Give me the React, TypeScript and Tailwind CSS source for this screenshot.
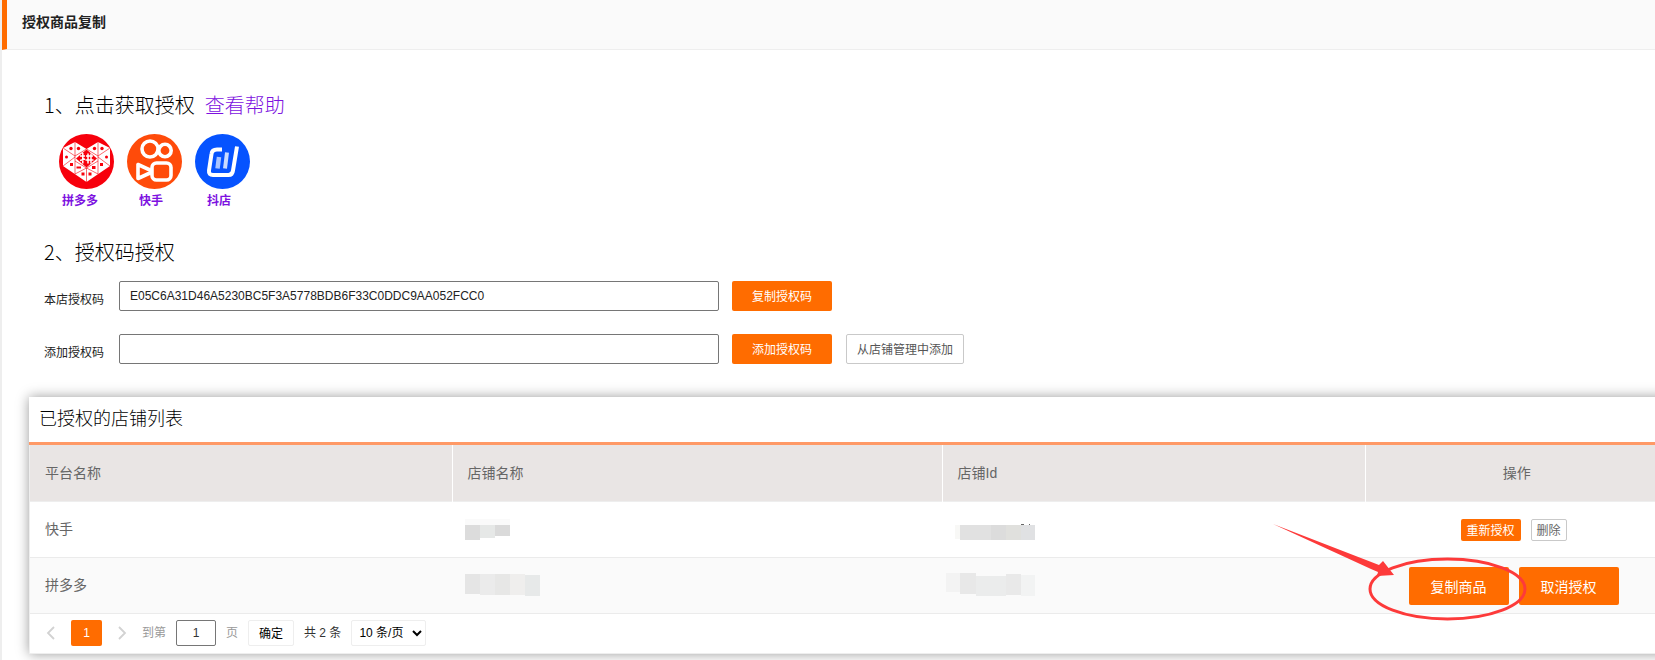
import React from 'react';

const platforms = [
  { name: '拼多多', labelClass: 'pl-[3px]', Logo: PinduoduoLogo },
  { name: '快手', labelClass: 'pl-3', Logo: KuaishouLogo },
  { name: '抖店', labelClass: 'pl-3', Logo: DoudianLogo },
];

function PinduoduoLogo() {
  return (
    <svg viewBox="0 0 55 55" className="size-[55px]" aria-hidden="true">
      <circle cx="27.5" cy="27.5" r="27.5" fill="#f7000c" />
      <path d="M16 8 27.5 15 39 8 51 14V32L27.5 48 4 32V14Z" fill="#fff" />
      <g stroke="#f7000c" strokeWidth="0.6" fill="none">
        <path d="M16 8V40M39 8V40M4 14 16 22 27.5 15M51 14 39 22 27.5 15M4 32 16 23M51 32 39 23M16 27 27.5 34 16 40M39 27 27.5 34 39 40M27.5 34V48" />
      </g>
      <path d="M27.5 15.500 38 24.500 27.5 33.500 17 24.500Z" fill="#f7000c" />
      <g stroke="#fff" strokeWidth="1.5" fill="none">
        <path d="M21 22h5M23.800 19v10.500M21 26.500l5-1.500M27 22h7M26.500 26h8M29 19.500v10M32 19.500v10" />
      </g>
      <g fill="#f7000c">
        <circle cx="12" cy="14.500" r="1.7" />
        <circle cx="19.500" cy="14.500" r="1.7" />
        <circle cx="35.500" cy="14.500" r="1.7" />
        <circle cx="43" cy="14.500" r="1.7" />
        <circle cx="7.500" cy="23" r="1.5" />
        <circle cx="47.500" cy="23" r="1.5" />
        <path d="M11 29h3v3h-3zM41 29h3v3h-3zM17.500 32.500h4.500v2h-4.500zM33 32h3.500v3H33zM22.500 38.500h3v3h-3zM29.500 38.500h3v3h-3z" />
      </g>
    </svg>
  );
}

function KuaishouLogo() {
  return (
    <svg viewBox="0 0 55 55" className="size-[55px]" aria-hidden="true">
      <circle cx="27.5" cy="27.5" r="27.5" fill="#ff4b0a" />
      <g fill="none" stroke="#fff" strokeWidth="3.6" strokeLinejoin="round">
        <circle cx="23" cy="15" r="8" />
        <circle cx="38" cy="16.500" r="6.200" />
        <rect x="25" y="29" width="19" height="17" rx="4.500" />
        <path d="M11 30.500v14l13-6v-2z" />
      </g>
    </svg>
  );
}

function DoudianLogo() {
  return (
    <svg viewBox="0 0 55 55" className="size-[55px]" aria-hidden="true">
      <circle cx="27.5" cy="27.5" r="27.5" fill="#0653ff" />
      <path
        d="M27 15.500h-5q-5 0-5.500 4.500l-2.500 16.500q-.5 4.500 4 4.500h15.500q4 0 4.500-4.500L42 12.500"
        fill="none"
        stroke="#fff"
        strokeWidth="4"
      />
      <path d="m24 23-1.500 11.500" stroke="#a9c4ff" strokeWidth="4.500" />
      <path d="m32 18.500-2 16" stroke="#c9dbff" strokeWidth="4" />
    </svg>
  );
}

/* Pixelated strips that hide the shop names and ids */
function Mosaic({ cells }: { cells: [number, number, number, number, string][] }) {
  return (
    <svg viewBox="0 0 92 26" className="-ml-[11px] block h-[26px] w-[92px]" aria-hidden="true">
      {cells.map(([x, y, w, h, fill], i) => (
        <rect key={i} x={x} y={y} width={w} height={h} fill={fill} />
      ))}
    </svg>
  );
}

const shops: {
  platform: string;
  name: [number, number, number, number, string][];
  id: [number, number, number, number, string][];
}[] = [
  {
    platform: '快手',
    name: [
      [9, 3, 45, 6, '#fafafa'],
      [9, 9, 15, 15, '#dcdcdc'],
      [24, 9, 15, 13, '#e6e8e7'],
      [39, 9, 15, 11, '#dadada'],
    ],
    id: [
      [9, 9, 6, 14, '#f8f8f6'],
      [14, 9, 31, 15, '#e1e1e1'],
      [45, 9, 15, 15, '#dcdcdc'],
      [60, 9, 15, 15, '#e0e0dd'],
      [75, 9, 14, 15, '#e0e1e3'],
      [75, 8, 3, 1, '#666666'],
      [83, 8, 1, 1, '#666666'],
    ],
  },
  {
    platform: '拼多多',
    name: [
      [9, 2, 15, 20, '#e5e5e5'],
      [24, 2, 15, 21, '#ebebeb'],
      [39, 2, 15, 21, '#e7e7e6'],
      [54, 2, 15, 21, '#efeeed'],
      [69, 3, 15, 21, '#e7e9e9'],
    ],
    id: [
      [0, 1, 15, 19, '#f3f3f3'],
      [14, 1, 16, 21, '#e8e8e8'],
      [30, 4, 30, 20, '#ebecec'],
      [60, 2, 15, 21, '#e9e9e9'],
      [75, 3, 14, 21, '#f2f3f3'],
    ],
  },
];

/* Hand-drawn arrow and circle around the copy button */
function Callout() {
  return (
    <svg
      viewBox="0 0 260 105"
      className="pointer-events-none absolute -top-[47px] -left-[139px] h-[105px] w-[260px]"
      aria-hidden="true"
    >
      <ellipse cx="177.500" cy="69" rx="77.500" ry="30" fill="none" stroke="#fd3a3a" strokeWidth="3" />
      <path d="M3 4 109 45l4-4 11 14-17 1 1-4-7-3Z" fill="#fd3a3a" />
    </svg>
  );
}

function ShopTable() {
  return (
    <table className="w-full table-fixed border-collapse text-sm text-[#666]">
      <colgroup>
        <col className="w-[422px]" />
        <col className="w-[490px]" />
        <col className="w-[423px]" />
        <col />
      </colgroup>
      <thead>
        <tr className="h-14 border-b border-[#eee] bg-[#e9e5e4] text-left">
          <th className="border-r border-white px-[15px] font-normal">平台名称</th>
          <th className="border-r border-white px-[15px] font-normal">店铺名称</th>
          <th className="border-r border-white px-[15px] font-normal">店铺Id</th>
          <th className="text-center font-normal">操作</th>
        </tr>
      </thead>
      <tbody>
        {shops.map((shop, i) => (
          <tr key={shop.platform} className="h-14 border-b border-[#ebebeb] even:bg-[#fafafa]">
            <td className="px-[15px]">{shop.platform}</td>
            <td className="px-[15px]"><Mosaic cells={shop.name} /></td>
            <td className="px-[15px]"><Mosaic cells={shop.id} /></td>
            <td className="pt-0.5 pr-1.5">
              {i === 0 ? (
                <div className="flex justify-center gap-2.5 text-xs">
                  <button className="h-[22px] w-[60px] rounded-xs bg-[#ff6c00] pt-0.5 text-white">重新授权</button>
                  <button className="h-[22px] w-9 rounded-xs border border-[#c9c9c9] bg-white pt-0.5">删除</button>
                </div>
              ) : (
                <div className="flex justify-center gap-2.5">
                  <div className="relative">
                    <button className="h-[38px] w-[100px] rounded-xs bg-[#ff6c00] pt-0.5 text-white">复制商品</button>
                    <Callout />
                  </div>
                  <button className="h-[38px] w-[100px] rounded-xs bg-[#ff6c00] pt-0.5 text-white">取消授权</button>
                </div>
              )}
            </td>
          </tr>
        ))}
      </tbody>
    </table>
  );
}

function Pagination() {
  return (
    <nav className="flex h-[39px] items-center pl-[15px] text-xs text-[#333]" aria-label="分页">
      <button className="flex w-[26px] text-[#d2d2d2]" aria-label="上一页">
        <svg viewBox="0 0 10 14" className="ml-px h-3.5 w-2.5" fill="none" stroke="currentColor" strokeWidth="1.8"><path d="M8 1 2 7l6 6" /></svg>
      </button>
      <button className="h-[26px] w-[31px] rounded-xs bg-[#ff6c00] text-white" aria-current="page">1</button>
      <button className="flex w-10 justify-center text-[#d2d2d2]" aria-label="下一页">
        <svg viewBox="0 0 10 14" className="h-3.5 w-2.5" fill="none" stroke="currentColor" strokeWidth="1.8"><path d="m2 1 6 6-6 6" /></svg>
      </button>
      <label className="flex items-center gap-2.5 text-[#999]">
        到第
        <input className="h-[26px] w-10 rounded-xs border border-[#767676] text-center text-[#333]" defaultValue="1" />
        页
      </label>
      <button className="ml-2.5 h-[26px] w-[46px] rounded-xs border border-[#eee] pt-0.5 text-black">确定</button>
      <span className="mx-2.5">共 2 条</span>
      <select className="h-[26px] w-[75px] rounded-xs border border-[#eee] bg-white pl-[3px] text-black" aria-label="每页条数">
        <option>10 条/页</option>
      </select>
    </nav>
  );
}

export default function App() {
  return (
    <div className="min-h-screen overflow-hidden border-l-2 border-[#eee] bg-white font-['Liberation_Sans','Noto_Sans_CJK_SC',sans-serif] text-[#222]">
      <header className="flex h-[50px] border-b border-l-5 border-b-[#eee] border-l-[#ff6c00] bg-[#fafafa] pt-3 pl-[15px]">
        <h1 className="text-sm font-bold">授权商品复制</h1>
      </header>

      <main className="pt-10">
        <section className="pl-[42px]">
          <h2 className="flex gap-2.5 font-['Noto_Sans_CJK_SC',sans-serif] text-xl leading-[30px] font-light text-black">
            1、点击获取授权
            <a href="#help" className="text-[#7d12e0]">查看帮助</a>
          </h2>
          <div className="mt-3.5 flex gap-[13px] pl-[15px]">
            {platforms.map(({ name, labelClass, Logo }) => (
              <a key={name} href="#auth" className="block w-[55px] text-xs font-bold text-[#7d12e0]">
                <Logo />
                <span className={`block pt-1 leading-4 ${labelClass}`}>{name}</span>
              </a>
            ))}
          </div>
        </section>

        <section className="mt-7 pl-[42px] text-xs">
          <h2 className="font-['Noto_Sans_CJK_SC',sans-serif] text-xl leading-[30px] font-light text-black">2、授权码授权</h2>
          <div className="mt-3.5 flex items-center">
            <label htmlFor="own-code" className="w-[75px] pt-2">本店授权码</label>
            <input
              id="own-code"
              className="h-[30px] w-[600px] rounded-xs border border-[#767676] px-2.5"
              defaultValue="E05C6A31D46A5230BC5F3A5778BDB6F33C0DDC9AA052FCC0"
            />
            <button className="ml-[13px] h-[30px] w-[100px] rounded-xs bg-[#ff6c00] pt-0.5 text-white">复制授权码</button>
          </div>
          <div className="mt-[23px] flex items-center">
            <label htmlFor="add-code" className="w-[75px] pt-2">添加授权码</label>
            <input id="add-code" className="h-[30px] w-[600px] rounded-xs border border-[#767676] px-2.5" />
            <button className="ml-[13px] h-[30px] w-[100px] rounded-xs bg-[#ff6c00] pt-0.5 text-white">添加授权码</button>
            <button className="ml-3.5 h-[30px] w-[118px] rounded-xs border border-[#c9c9c9] pt-0.5 text-[#555]">从店铺管理中添加</button>
          </div>
        </section>

        <section className="mt-[33px] -mr-[14px] ml-[27px] bg-white shadow-[0_0_12px_rgba(0,0,0,0.4)]">
          <h2 className="h-12 border-b-3 border-[#ff9966] pl-2.5 text-lg leading-[45px] font-light text-black">已授权的店铺列表</h2>
          <div className="border border-t-0 border-[#eee]">
            <ShopTable />
            <Pagination />
          </div>
        </section>
      </main>
    </div>
  );
}
